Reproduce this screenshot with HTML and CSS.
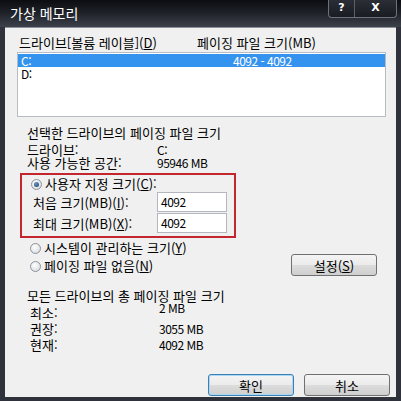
FILE: index.html
```html
<!DOCTYPE html>
<html lang="ko">
<head>
  <meta charset="UTF-8" />
  <title>가상 메모리</title>
  <link rel="stylesheet" href="styles.css">
</head>
<body>
  <div class="window">
    <div class="titlebar">
      <span class="title">가상 메모리</span>
      <div class="caption-buttons">
        <span class="cap cap-help">?</span>
        <span class="cap cap-close">X</span>
      </div>
    </div>

    <div class="client">
      <div class="list-head">
        <span class="head-drive">드라이브[볼륨 레이블](<u>D</u>)</span>
        <span>페이징 파일 크기(MB)</span>
      </div>
      <div class="listbox">
        <div class="list-row selected"><span class="row-drive num">C:</span><span class="num">4092 - 4092</span></div>
        <div class="list-row"><span class="row-drive num">D:</span></div>
      </div>

      <div class="section-title">선택한 드라이브의 페이징 파일 크기</div>
      <div class="info-row"><span class="info-label">드라이브:</span><span class="num">C:</span></div>
      <div class="info-row"><span class="info-label">사용 가능한 공간:</span><span class="num">95946 MB</span></div>

      <div class="custom-box">
        <label class="radio-row"><span class="radio checked"></span>사용자 지정 크기(<u>C</u>):</label>
        <div class="size-row">
          <span class="size-label">처음 크기(MB)(<u>I</u>):</span>
          <span class="textbox num">4092</span>
        </div>
        <div class="size-row">
          <span class="size-label">최대 크기(MB)(<u>X</u>):</span>
          <span class="textbox num">4092</span>
        </div>
      </div>

      <div class="options">
        <div class="radio-list">
          <label class="radio-row"><span class="radio"></span>시스템이 관리하는 크기(<u>Y</u>)</label>
          <label class="radio-row"><span class="radio"></span>페이징 파일 없음(<u>N</u>)</label>
        </div>
        <button class="btn btn-set" type="button">설정(<u>S</u>)</button>
      </div>

      <div class="section-title totals-title">모든 드라이브의 총 페이징 파일 크기</div>
      <div class="total-row"><span class="total-label">최소:</span><span class="num raised">2 MB</span></div>
      <div class="total-row"><span class="total-label">권장:</span><span class="num">3055 MB</span></div>
      <div class="total-row"><span class="total-label">현재:</span><span class="num">4092 MB</span></div>

      <div class="dialog-buttons">
        <button class="btn btn-default" type="button">확인</button>
        <button class="btn" type="button">취소</button>
      </div>
    </div>
  </div>
</body>
</html>
```

FILE: styles.css
```css
body { margin: 0; font-family: "Noto Sans CJK KR", "Noto Sans", sans-serif; font-size: 13px; color: #000; }
u { text-decoration: underline; text-underline-offset: 1px; }
.num { font-size: 12px; letter-spacing: -0.5px; }

.window { width: 401px; height: 401px; display: flex; flex-direction: column; background: #2f323a; box-sizing: border-box; }

.titlebar { height: 27px; display: flex; justify-content: space-between; align-items: flex-start; padding: 0 4px 0 10px;
  background: linear-gradient(to bottom, #0c0d11 0%, #1d2026 45%, #3d414b 100%); }
.title { color: #fff; font-size: 14px; line-height: 27px; }
.caption-buttons { display: flex; height: 17px; border: 1px solid #6d717c; border-top: none; border-radius: 0 0 4px 4px;
  background: linear-gradient(to bottom, #2b2e36, #1a1c22); }
.cap { color: #fff; font-family: "DejaVu Sans", sans-serif; font-weight: bold; font-size: 11px; line-height: 16px; text-align: center; }
.cap-help { width: 25px; border-right: 1px solid #5b5f69; }
.cap-close { width: 41px; }

.client { flex: 1; margin: 0 5px 4px 5px; background: #f0f0f0; padding: 0 10px 0 12px; border-top: 1px solid #8c909a; }

.list-head { display: flex; margin-top: 8px; padding-left: 2px; line-height: 14px; }
.head-drive { width: 178px; }

.listbox { height: 65px; margin-top: 2px; box-sizing: border-box; border: 1px solid #b7bcc4; background: #fff; padding-top: 1px; }
.list-row { display: flex; height: 13px; line-height: 13px; padding-left: 3px; }
.list-row.selected { background: #3593f0; color: #fff; }
.row-drive { width: 212px; }

.section-title { margin-top: 9px; padding-left: 10px; line-height: 14px; }
.info-row { display: flex; padding-left: 10px; line-height: 13px; }
.section-title + .info-row { margin-top: 3px; }
.info-label { width: 130px; }

.custom-box { width: 216px; box-sizing: border-box; margin: 4px 0 0 3px; border: 2px solid #c4262d; padding: 2px 0 3px 9px; }
.radio-row { display: flex; align-items: center; height: 14px; line-height: 14px; }
.radio { width: 11px; height: 11px; box-sizing: border-box; border: 1px solid #8e949c; border-radius: 50%; margin-right: 3px;
  background: radial-gradient(circle at 40% 35%, #fff 0%, #e6e8eb 55%, #cdd1d6 100%); position: relative; }
.radio.checked::after { content: ""; position: absolute; left: 2px; top: 2px; width: 5px; height: 5px; border-radius: 50%;
  background: radial-gradient(circle at 40% 35%, #6c9bc9 0%, #244a72 80%); }
.size-row { display: flex; align-items: center; margin-top: 1px; padding-left: 2px; }
.size-label { width: 124px; }
.textbox { width: 70px; height: 20px; box-sizing: border-box; border: 1px solid #b4b8be; background: #fff; padding-left: 3px; line-height: 18px; }

.options { display: flex; margin-top: 3px; }
.radio-list { display: flex; flex-direction: column; gap: 4px; padding-left: 13px; }
.btn { width: 86px; height: 22px; box-sizing: border-box; border: 1px solid #707070; border-radius: 3px; padding: 0;
  background: linear-gradient(to bottom, #f4f4f4 0%, #ebebeb 50%, #dcdcdc 51%, #cfcfcf 100%);
  font-family: inherit; font-size: 13px; color: #000; }
.btn-set { margin: 13px 9px 0 auto; }

.totals-title { margin-top: 13px; }
.total-row { display: flex; align-items: flex-start; height: 16px; line-height: 16px; padding-left: 13px; }
.totals-title + .total-row { margin-top: 2px; }
.total-label { width: 129px; }
.raised { margin-top: -5px; }

.dialog-buttons { display: flex; justify-content: flex-end; gap: 10px; margin: 21px -4px 0 0; }
.btn-default { border-color: #3c7fb1; box-shadow: inset 0 0 0 1px #a8d8f5; }
```
